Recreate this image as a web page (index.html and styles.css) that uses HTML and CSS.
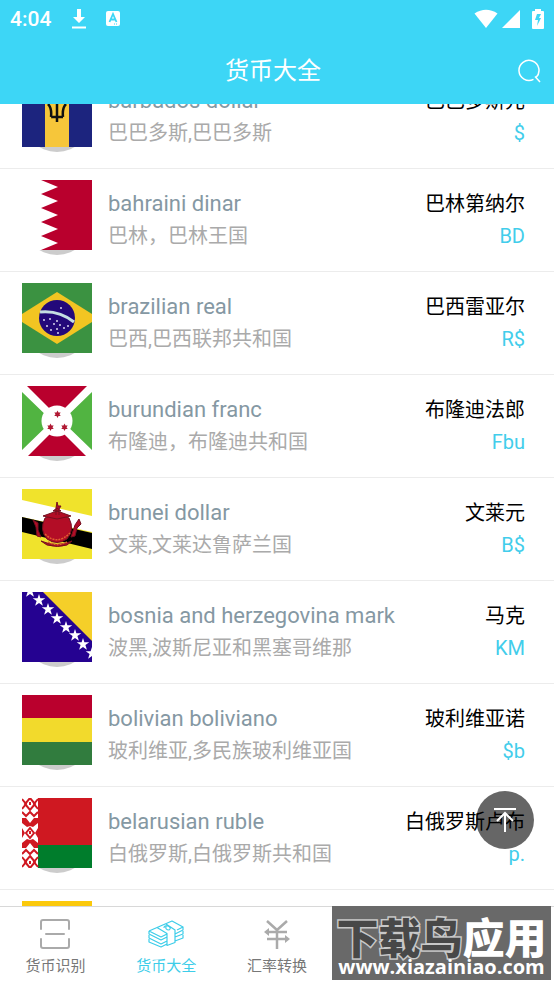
FILE: index.html
```
<!DOCTYPE html>
<html lang="zh-CN">
<head>
<meta charset="utf-8">
<meta name="viewport" content="width=device-width, initial-scale=1">
<title>货币大全</title>
<link rel="stylesheet" href="styles.css">
</head>
<body>
<header class="header">
  <div class="status">
    <time class="clock">4:04</time>
    <svg class="status-download" width="16" height="22" viewBox="0 0 16 22"><path d="M6 1h4v8h4l-6 6-6-6h4zM1 18.500h14v2H1z" fill="#fff"/></svg>
    <svg class="status-app" width="16" height="17" viewBox="0 0 16 17"><rect x="1" y="1" width="14" height="15" rx="2" fill="#fff"/><path d="M4.500 12 8 4l3.500 8M6 9.500h4" fill="none" stroke="#3dd6f6" stroke-width="1.800"/><path d="M9 14h4" stroke="#3dd6f6" stroke-dasharray="1 1"/></svg>
    <div class="signals">
      <svg width="24" height="20" viewBox="0 0 24 20"><path d="M.5 4.500Q12-3 23.500 4.500L12 19z" fill="#fff"/></svg>
      <svg width="18" height="20" viewBox="0 0 18 20"><path d="M18 1v18H0z" fill="#fff"/></svg>
      <svg class="battery" width="12" height="20" viewBox="0 0 12 20"><path d="M3 2V0h6v2h2q1 0 1 1v16q0 1-1 1H1q-1 0-1-1V3q0-1 1-1z" fill="#fff"/><path d="M5 5h4L7 9h2l-4 8 1-6H3z" fill="#3dd6f6"/></svg>
    </div>
  </div>
  <div class="titlebar">
    <h1 class="title">货币大全</h1>
    <button class="search" aria-label="搜索"><svg width="24" height="24" viewBox="0 0 24 24" fill="none" stroke="#fff" stroke-width="1.500"><path d="M15.500 20.300A10 10 0 1 1 18.200 18.300M17 17.500l5 5.500"/></svg></button>
  </div>
</header>

<main class="viewport">
  <ul class="list">
    <li class="row">
      <span class="flag"><svg viewBox="0 0 70 70"><path fill="#1c247e" d="M0 0h70v70H0z"/><path fill="#f6c63a" d="M23 0h24v70H23z"/><path d="M35 45V19M29 40h12M26 27q4 4 3 13M44 27q-4 4-3 13" fill="none" stroke="#111" stroke-width="2.500"/></svg></span>
      <div class="info"><h2 class="name">barbados dollar</h2><p class="place">巴巴多斯,巴巴多斯</p></div>
      <div class="unit"><p class="local">巴巴多斯元</p><p class="symbol">$</p></div>
    </li>
    <li class="row">
      <span class="flag"><svg viewBox="0 0 70 70"><path fill="#fff" d="M0 0h40v70H0z"/><path fill="#b9002d" d="M70 0H19l17 7-17 7 17 7-17 7 17 7-17 7 17 7-17 7 17 7-17 7h51z"/></svg></span>
      <div class="info"><h2 class="name">bahraini dinar</h2><p class="place">巴林，巴林王国</p></div>
      <div class="unit"><p class="local">巴林第纳尔</p><p class="symbol">BD</p></div>
    </li>
    <li class="row">
      <span class="flag"><svg viewBox="0 0 70 70"><path fill="#3b9241" d="M0 0h70v70H0z"/><path fill="#f2c522" d="M0 31 35 9l35 22v8L35 61 0 39z"/><circle cx="35" cy="35" r="18" fill="#23097a"/><path d="M18 29q19-2 34 10" fill="none" stroke="#c5dfe3" stroke-width="3"/><g fill="#d8d5ee"><circle cx="22" cy="37" r="1"/><circle cx="28" cy="36" r="1"/><circle cx="35" cy="38" r="1"/><circle cx="32" cy="41" r="1"/><circle cx="38" cy="42" r="1"/><circle cx="35" cy="46" r="1"/><circle cx="25" cy="43" r="1"/><circle cx="29" cy="47" r="1"/><circle cx="42" cy="45" r="1"/><circle cx="46" cy="43" r="1"/><circle cx="36" cy="50" r="1"/><circle cx="39" cy="25" r="1"/></g></svg></span>
      <div class="info"><h2 class="name">brazilian real</h2><p class="place">巴西,巴西联邦共和国</p></div>
      <div class="unit"><p class="local">巴西雷亚尔</p><p class="symbol">R$</p></div>
    </li>
    <li class="row">
      <span class="flag"><svg viewBox="0 0 70 70"><path fill="#fff" d="M0 0h70v70H0z"/><path fill="#b9002d" d="M5 0h60L35 30zM6 70h58L35 41z"/><path fill="#51b441" d="M0 6l30 29L0 64zM70 6 40 35l30 29z"/><circle cx="35" cy="35" r="15.500" fill="#fff"/><g fill="#b01832"><path id="star6" d="m35.500 24.500 1 2h2.200l-1.200 1.800 1.200 1.800h-2.200l-1 2-1-2h-2.200l1.200-1.800-1.200-1.800h2.200z"/><use href="#star6" x="-7" y="13"/><use href="#star6" x="7" y="13"/></g></svg></span>
      <div class="info"><h2 class="name">burundian franc</h2><p class="place">布隆迪，布隆迪共和国</p></div>
      <div class="unit"><p class="local">布隆迪法郎</p><p class="symbol">Fbu</p></div>
    </li>
    <li class="row">
      <span class="flag"><svg viewBox="0 0 70 70"><path fill="#f0e32c" d="M0 0h70v70H0z"/><path fill="#fff" d="M0 11l70 16v16L0 28z"/><path d="M0 28l70 16v16L0 43z"/><g fill="#b30d26" stroke="#741020"><path d="M23 29q12-7 24 0 6 12-2 21-10 7-20 0-8-9-2-21z"/><path d="M34 26v-7l1-6 1 4h3l-2 3v6M31 22l4-3 4 3zM21 27l14-5 14 5-14 3z"/><path d="m11 31 5 3v7l3 7-4-1-1-9zM57 30l-4 6-2 6-2 6 4-1 2-8 4-4z"/><path d="M19 52q16 7 31 0l-5 4q-9 3-20 0z"/></g><path d="M23 45q12 12 25-1M26 53q9 5 19 0" fill="none" stroke="#e0602f" stroke-width="1.500" stroke-dasharray="2 1"/></svg></span>
      <div class="info"><h2 class="name">brunei dollar</h2><p class="place">文莱,文莱达鲁萨兰国</p></div>
      <div class="unit"><p class="local">文莱元</p><p class="symbol">B$</p></div>
    </li>
    <li class="row">
      <span class="flag"><svg viewBox="0 0 70 70"><path fill="#250291" d="M0 0h70v70H0z"/><path fill="#f5cf29" d="M21 0h49v49z"/><g fill="#fff"><path id="star5" d="m17 2 1.400 4.200h4.900l-3.900 2.900 1.500 4.600-3.900-2.800-3.900 2.800 1.500-4.600-3.900-2.900h4.900z"/><use href="#star5" x="-9" y="-9"/><use href="#star5" x="9" y="9"/><use href="#star5" x="18" y="18"/><use href="#star5" x="27" y="27"/><use href="#star5" x="36" y="35"/><use href="#star5" x="44" y="44"/><use href="#star5" x="53" y="53"/></g></svg></span>
      <div class="info"><h2 class="name">bosnia and herzegovina mark</h2><p class="place">波黑,波斯尼亚和黑塞哥维那</p></div>
      <div class="unit"><p class="local">马克</p><p class="symbol">KM</p></div>
    </li>
    <li class="row">
      <span class="flag"><svg viewBox="0 0 70 70"><path fill="#ba002d" d="M0 0h70v24H0z"/><path fill="#f2da2c" d="M0 23h70v24H0z"/><path fill="#317c3e" d="M0 47h70v23H0z"/></svg></span>
      <div class="info"><h2 class="name">bolivian boliviano</h2><p class="place">玻利维亚,多民族玻利维亚国</p></div>
      <div class="unit"><p class="local">玻利维亚诺</p><p class="symbol">$b</p></div>
    </li>
    <li class="row">
      <span class="flag"><svg viewBox="0 0 70 70"><path fill="#fff" d="M0 0h17v70H0z"/><path fill="#cf1821" d="M16 0h54v47H16z"/><path fill="#007d2c" d="M16 47h54v23H16z"/><g fill="none" stroke="#cf1821" stroke-width="2"><path d="M0 1l4 5-4 5M16 1l-4 5 4 5M8 0l5 6-5 6-5-6zM0 14l4 4 4-4 4 4 4-4M0 59l4 5-4 5M16 59l-4 5 4 5M8 58l5 6-5 6-5-6zM0 56l4-4 4 4 4-4 4 4"/><path d="m8 30 4 5-4 5-4-5z"/></g><path d="M0 20h4l4 5 4-5h4v5l-5 4-3-1-3 1-5-4zM0 50h4l4-5 4 5h4v-5l-5-4-3 1-3-1-5 4zM0 30l3 5-3 5zM16 30l-3 5 3 5z" fill="#cf1821"/><path d="M7 4h2v3H7zM7 63h2v3H7zM7 33h2v3H7z" fill="#cf1821"/></svg></span>
      <div class="info"><h2 class="name">belarusian ruble</h2><p class="place">白俄罗斯,白俄罗斯共和国</p></div>
      <div class="unit"><p class="local">白俄罗斯卢布</p><p class="symbol">p.</p></div>
    </li>
    <li class="row">
      <span class="flag"><svg viewBox="0 0 70 70"><path fill="#fbc90c" d="M0 0h70v35H0z"/><path fill="#174696" d="M0 35h70v18H0z"/><path fill="#c91b2d" d="M0 53h70v17H0z"/></svg></span>
    </li>
  </ul>
  <button class="to-top" aria-label="返回顶部"><svg width="24" height="26" viewBox="0 0 24 26" fill="none" stroke="#fff" stroke-width="2"><path d="M1 2h22M12 25V6M4 14l8-8 8 8"/></svg></button>
</main>

<nav class="tabs">
  <a class="tab" href="#scan"><svg width="32" height="32" viewBox="0 0 32 32" fill="none" stroke="#aaa" stroke-width="2" stroke-linecap="round"><path d="M2 11V4q0-2 2-2h24q2 0 2 2v7M2 21v7q0 2 2 2h24q2 0 2-2v-7M7 16h18"/></svg><span>货币识别</span></a>
  <a class="tab tab-active" href="#all"><svg width="36" height="32" viewBox="0 0 36 32" fill="none" stroke="#3dcde9" stroke-width="1.200" stroke-linejoin="round"><path d="M1 13 24 3l11 6-6 3M1 13l12 6 6-3M1 13v3l12 6 6-3M1 17v3l12 6 6-3M1 21v3l12 5 6-3M9 9.500l10 6v12l8-3V12l-9-6M35 9v3l-8 4M35 13v3l-8 3M35 17v3l-8 3M16 10q0-3 4-2 4 2 1 4-4 0-3-4"/></svg><span>货币大全</span></a>
  <a class="tab" href="#rates"><svg width="32" height="32" viewBox="0 0 32 32"><path d="M6 3l10 9L26 3M16 12v19M6 14h20M6 21h20" fill="none" stroke="#aaa" stroke-width="2.500"/><path d="M3 14l5-4v8zM29 21l-5-4v8z" fill="#aaa"/></svg><span>汇率转换</span></a>
  <div class="watermark">
    <strong class="mark-name"><span class="mark-dark">下载鸟</span>应用</strong>
    <span class="mark-url">www.xiazainiao.com</span>
  </div>
</nav>
</body>
</html>
```
FILE: styles.css
```
* { box-sizing: border-box; margin: 0; padding: 0; }

body {
  display: flex;
  flex-direction: column;
  height: 100vh;
  overflow: hidden;
  background: #fff;
  font-family: Roboto, "Noto Sans CJK SC", sans-serif;
}

button { border: 0; background: none; }
svg { display: block; }

.header { flex: none; background: #3dd6f6; color: #fff; }

.status { display: flex; align-items: center; height: 37px; padding: 0 10px; }
.clock { font-size: 21px; line-height: 36px; font-weight: 500; }
.status-download { margin-left: 20px; }
.status-app { margin-left: 18px; }
.signals { display: flex; align-items: center; gap: 4px; margin-left: auto; }
.battery { margin-left: 8px; }

.titlebar {
  display: grid;
  grid-template-columns: 32px 1fr 40px;
  align-items: center;
  height: 67px;
  padding: 0 4px;
}
.title { grid-column: 2; text-align: center; font-size: 24px; line-height: 36px; font-weight: 400; }
.search { display: flex; justify-content: center; }

.viewport { position: relative; flex: 1; min-height: 0; overflow: hidden; }
.list { margin-top: -38px; list-style: none; }

.row {
  display: flex;
  gap: 16px;
  padding: 11px 29px 21px 22px;
  border-bottom: 1px solid #ececec;
}

.flag { position: relative; flex: none; width: 70px; height: 70px; }
.flag svg { position: relative; width: 100%; height: 100%; }
.flag::before {
  content: "";
  position: absolute;
  inset: 5px 0 -5px;
  border-radius: 50%;
  background: #ccc;
}

.info, .unit { height: 70px; padding-top: 8px; }
.info { flex: 1; min-width: 0; }
.unit { flex: none; text-align: right; }
.name { color: #8598a3; font-size: 22px; line-height: 32px; font-weight: 400; }
.place { color: #aaa; font-size: 20px; line-height: 32px; }
.local { color: #000; font-size: 20px; line-height: 32px; }
.symbol { color: #42cdeb; font-size: 20px; line-height: 32px; }

.to-top {
  position: absolute;
  right: 20px;
  bottom: 57px;
  display: flex;
  align-items: center;
  justify-content: center;
  width: 58px;
  height: 58px;
  border-radius: 50%;
  background: rgba(0, 0, 0, .6);
}

.tabs {
  position: relative;
  flex: none;
  display: grid;
  grid-template-columns: repeat(5, 1fr);
  border-top: 1px solid #d8d8d8;
  background: #fff;
}
.tab {
  display: flex;
  flex-direction: column;
  align-items: center;
  gap: 5px;
  padding: 11px 0 7px;
  color: #777;
  font-size: 15px;
  line-height: 22px;
  text-decoration: none;
}
.tab-active { color: #3dcde9; }

.watermark {
  position: absolute;
  top: -1px;
  right: 3px;
  display: flex;
  flex-direction: column;
  align-items: center;
  width: 219px;
  height: 74px;
  padding-top: 9px;
  background: #696969;
  color: #fff;
}
.mark-name { font: 900 42px/42px "Noto Sans CJK SC", sans-serif; }
.mark-dark {
  color: #484848;
  paint-order: stroke;
  -webkit-text-stroke: 3px #c8c8c8;
}
.mark-url { font: 700 20px/20px "Open Sans", sans-serif; }
```
